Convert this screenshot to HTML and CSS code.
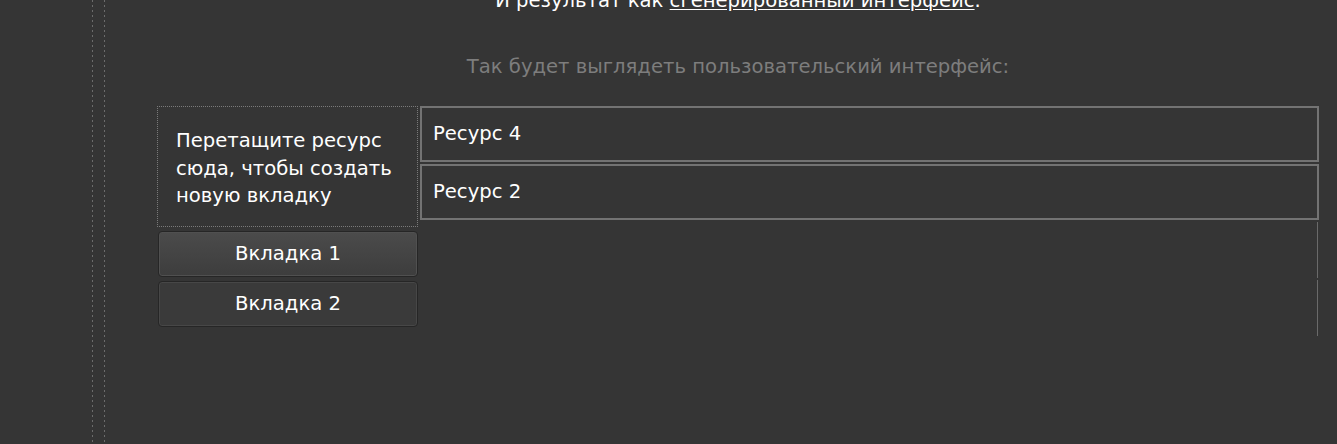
FILE: index.html
```html
<!DOCTYPE html>
<html lang="ru">
<head>
<meta charset="utf-8">
<title>Предпросмотр интерфейса</title>
<link rel="stylesheet" href="styles.css">
</head>
<body>
<div class="frame">
  <div class="rail"></div>
  <main class="content">
    <p class="lead">И результат как <span class="link">сгенерированный интерфейс</span>.</p>
    <p class="caption">Так будет выглядеть пользовательский интерфейс:</p>
    <div class="preview">
      <div class="tabs">
        <div class="dropzone">Перетащите ресурс<br>сюда, чтобы создать<br>новую вкладку</div>
        <div class="tab tab-active">Вкладка 1</div>
        <div class="tab">Вкладка 2</div>
      </div>
      <div class="resources">
        <div class="res">Ресурс 4</div>
        <div class="res">Ресурс 2</div>
        <div class="slot"></div>
        <div class="slot"></div>
      </div>
    </div>
  </main>
</div>
</body>
</html>
```
FILE: styles.css
```css
html, body {
  margin: 0;
  padding: 0;
  background: #353535;
  height: 444px;
  overflow: hidden;
}
body {
  font-family: "DejaVu Sans", Verdana, sans-serif;
  font-size: 19.6px;
  color: #ffffff;
}
.frame {
  display: flex;
  align-items: flex-start;
  height: 444px;
}
.rail {
  flex: 0 0 auto;
  margin-left: 92px;
  width: 13px;
  height: 444px;
  background-image:
    repeating-linear-gradient(to bottom, #6c6c6c 0 2px, transparent 2px 5px),
    repeating-linear-gradient(to bottom, #6c6c6c 0 2px, transparent 2px 5px);
  background-size: 1px 100%, 1px 100%;
  background-position: left top, right top;
  background-repeat: no-repeat;
}
.content {
  flex: 0 0 auto;
  margin-left: 52px;
  width: 1162px;
}
.lead {
  margin: -13px 0 0;
  line-height: 28px;
  text-align: center;
  color: #ffffff;
}
.link {
  text-decoration: underline;
  text-underline-offset: 2px;
}
.caption {
  margin: 38px 0 0;
  line-height: 28px;
  text-align: center;
  color: #7d7d7d;
}
.preview {
  margin-top: 25px;
  display: flex;
  gap: 2px;
  align-items: flex-start;
}
.tabs {
  width: 261px;
  display: flex;
  flex-direction: column;
  gap: 4px;
}
.dropzone {
  box-sizing: border-box;
  height: 121px;
  border: 1px dotted #7a7a7a;
  padding: 20px 10px 0 18px;
  line-height: 27.5px;
}
.tab {
  box-sizing: border-box;
  height: 46px;
  margin: 0 0 0 1px;
  border: 1px solid #262626;
  border-radius: 4px;
  box-shadow: inset 0 0 0 1px #474747;
  background: #3a3a3a;
  display: flex;
  align-items: center;
  justify-content: center;
  padding-bottom: 2px;
}
.tab-active {
  background: linear-gradient(to bottom, #4b4b4b, #3d3d3d);
  box-shadow: inset 0 0 0 1px #505050;
}
.resources {
  width: 899px;
  display: flex;
  flex-direction: column;
  gap: 2px;
}
.res {
  box-sizing: border-box;
  height: 56px;
  border: 2px solid #737373;
  display: flex;
  align-items: center;
  padding: 0 0 2px 11px;
}
.slot {
  box-sizing: border-box;
  height: 56px;
  border-right: 1px solid #6a6a6a;
  margin-right: 1px;
}
```
